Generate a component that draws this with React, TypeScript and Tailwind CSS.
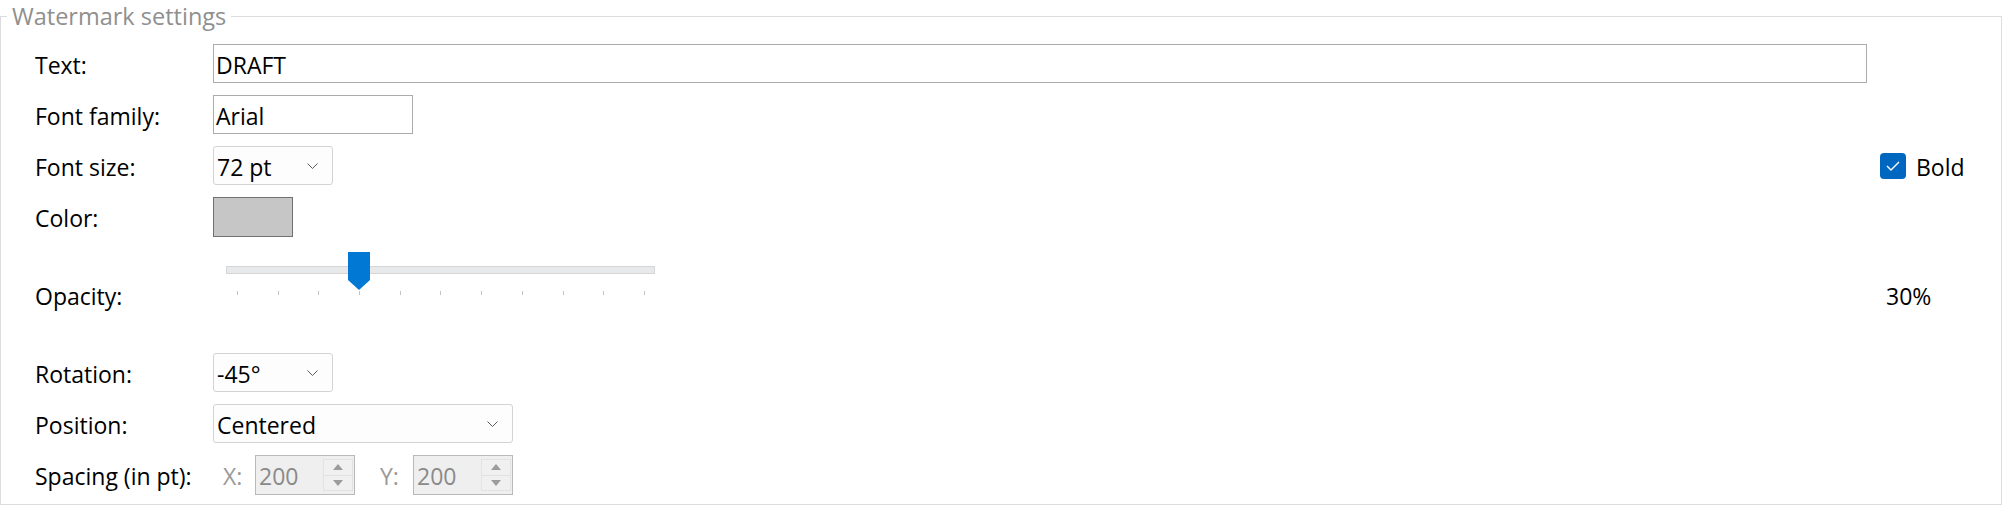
import React from "react";

function Chevron() {
  return (
    <svg width="11" height="6" viewBox="0 0 11 6" className="shrink-0">
      <path d="M0.5 0.5L5.5 5.5L10.5 0.5" fill="none" stroke="#5c5c5c" strokeWidth="1" />
    </svg>
  );
}

function Combo({ value, width }: { value: string; width: string }) {
  return (
    <div
      className={`flex h-[39px] items-center justify-between rounded-[3px] border border-[#d3d3d3] bg-[#fdfdfd] pl-[3px] pr-[14px] ${width}`}
    >
      <span className="pt-[3px]">{value}</span>
      <Chevron />
    </div>
  );
}

function Spin({ value }: { value: string }) {
  return (
    <div className="flex h-[40px] w-[100px] items-center border border-[#b9b9b9] bg-[#efefef]">
      <span className="flex-1 pl-[3px] pt-[3px] text-[#8a8a8a]">{value}</span>
      <div className="mr-[1px] flex h-[32px] w-[30px] flex-col">
        <div className="flex flex-1 items-center justify-center border border-[#e2e2e2] bg-[#f0f0f0]">
          <svg width="10" height="6" viewBox="0 0 10 6">
            <path d="M0 6L5 0L10 6Z" fill="#9c9c9c" />
          </svg>
        </div>
        <div className="flex flex-1 items-center justify-center border border-t-0 border-[#e2e2e2] bg-[#f0f0f0]">
          <svg width="10" height="6" viewBox="0 0 10 6">
            <path d="M0 0L5 6L10 0Z" fill="#9c9c9c" />
          </svg>
        </div>
      </div>
    </div>
  );
}

function Row({
  h,
  label,
  children,
  right,
}: {
  h: string;
  label: string;
  children?: React.ReactNode;
  right?: React.ReactNode;
}) {
  return (
    <div className={`flex items-center pl-[34px] ${h}`}>
      <div className="w-[178px] shrink-0 pt-[3px]">{label}</div>
      <div className="flex flex-1 items-center">{children}</div>
      <div className="flex w-[121px] shrink-0 items-center">{right}</div>
    </div>
  );
}

function Slider() {
  const ticks = Array.from({ length: 11 });
  return (
    <div className="relative h-[45px] w-[430px]">
      <div className="absolute left-0 top-[14px] h-[8px] w-[429px] border border-[#d6d6d6] bg-[#e7e9ea]" />
      <svg
        width="22"
        height="38"
        viewBox="0 0 22 38"
        className="absolute left-[122px] top-0"
      >
        <path d="M0 0H22V28L11 38L0 28Z" fill="#0078d4" />
      </svg>
      <div className="absolute left-[11px] top-[39px] flex w-[408px] justify-between">
        {ticks.map((_, i) => (
          <div key={i} className="h-[4px] w-[1px] bg-[#c4c4c4]" />
        ))}
      </div>
    </div>
  );
}

export default function App() {
  return (
    <div className="h-[507px] w-[2002px] bg-white font-['Segoe_UI','Open_Sans',sans-serif] text-[23px] text-black">
      <fieldset className="h-[505px] w-[2002px] border border-[#dcdcdc] pt-[6px]">
        <legend className="ml-[6px] px-[5px] text-[23.5px] leading-[32px] text-[#8f8f8f]">
          Watermark settings
        </legend>
        <Row h="h-[51px]" label="Text:">
          <div className="flex h-[39px] w-[1654px] items-center border border-[#ababab] bg-white pl-[2px] pt-[3px]">
            DRAFT
          </div>
        </Row>
        <Row h="h-[51px]" label="Font family:">
          <div className="flex h-[39px] w-[200px] items-center border border-[#ababab] bg-white pl-[2px] pt-[3px]">
            Arial
          </div>
        </Row>
        <Row
          h="h-[51px]"
          label="Font size:"
          right={
            <div className="flex items-center gap-[10px]">
              <div className="flex h-[26px] w-[26px] items-center justify-center rounded-[4px] bg-[#0067c0]">
                <svg width="14" height="10" viewBox="0 0 14 10">
                  <path d="M1 5L5 9L13 1" fill="none" stroke="#ffffff" strokeWidth="1.4" />
                </svg>
              </div>
              <span className="pt-[3px]">Bold</span>
            </div>
          }
        >
          <Combo value="72 pt" width="w-[120px]" />
        </Row>
        <Row h="h-[52px]" label="Color:">
          <div className="h-[40px] w-[80px] border border-[#707070] bg-[#c6c6c6]" />
        </Row>
        <div className="flex h-[104px] items-center pl-[34px]">
          <div className="w-[178px] shrink-0 pt-[3px]">Opacity:</div>
          <div className="flex-1 self-stretch pl-[13px] pt-[9px]">
            <Slider />
          </div>
          <div className="w-[121px] shrink-0 pl-[6px] pt-[3px]">30%</div>
        </div>
        <Row h="h-[51px]" label="Rotation:">
          <Combo value="-45°" width="w-[120px]" />
        </Row>
        <Row h="h-[51px]" label="Position:">
          <Combo value="Centered" width="w-[300px]" />
        </Row>
        <Row h="h-[52px]" label="Spacing (in pt):">
          <span className="ml-[10px] w-[32px] pt-[3px] text-[#9a9a9a]">X:</span>
          <Spin value="200" />
          <span className="ml-[25px] w-[33px] pt-[3px] text-[#9a9a9a]">Y:</span>
          <Spin value="200" />
        </Row>
      </fieldset>
    </div>
  );
}
